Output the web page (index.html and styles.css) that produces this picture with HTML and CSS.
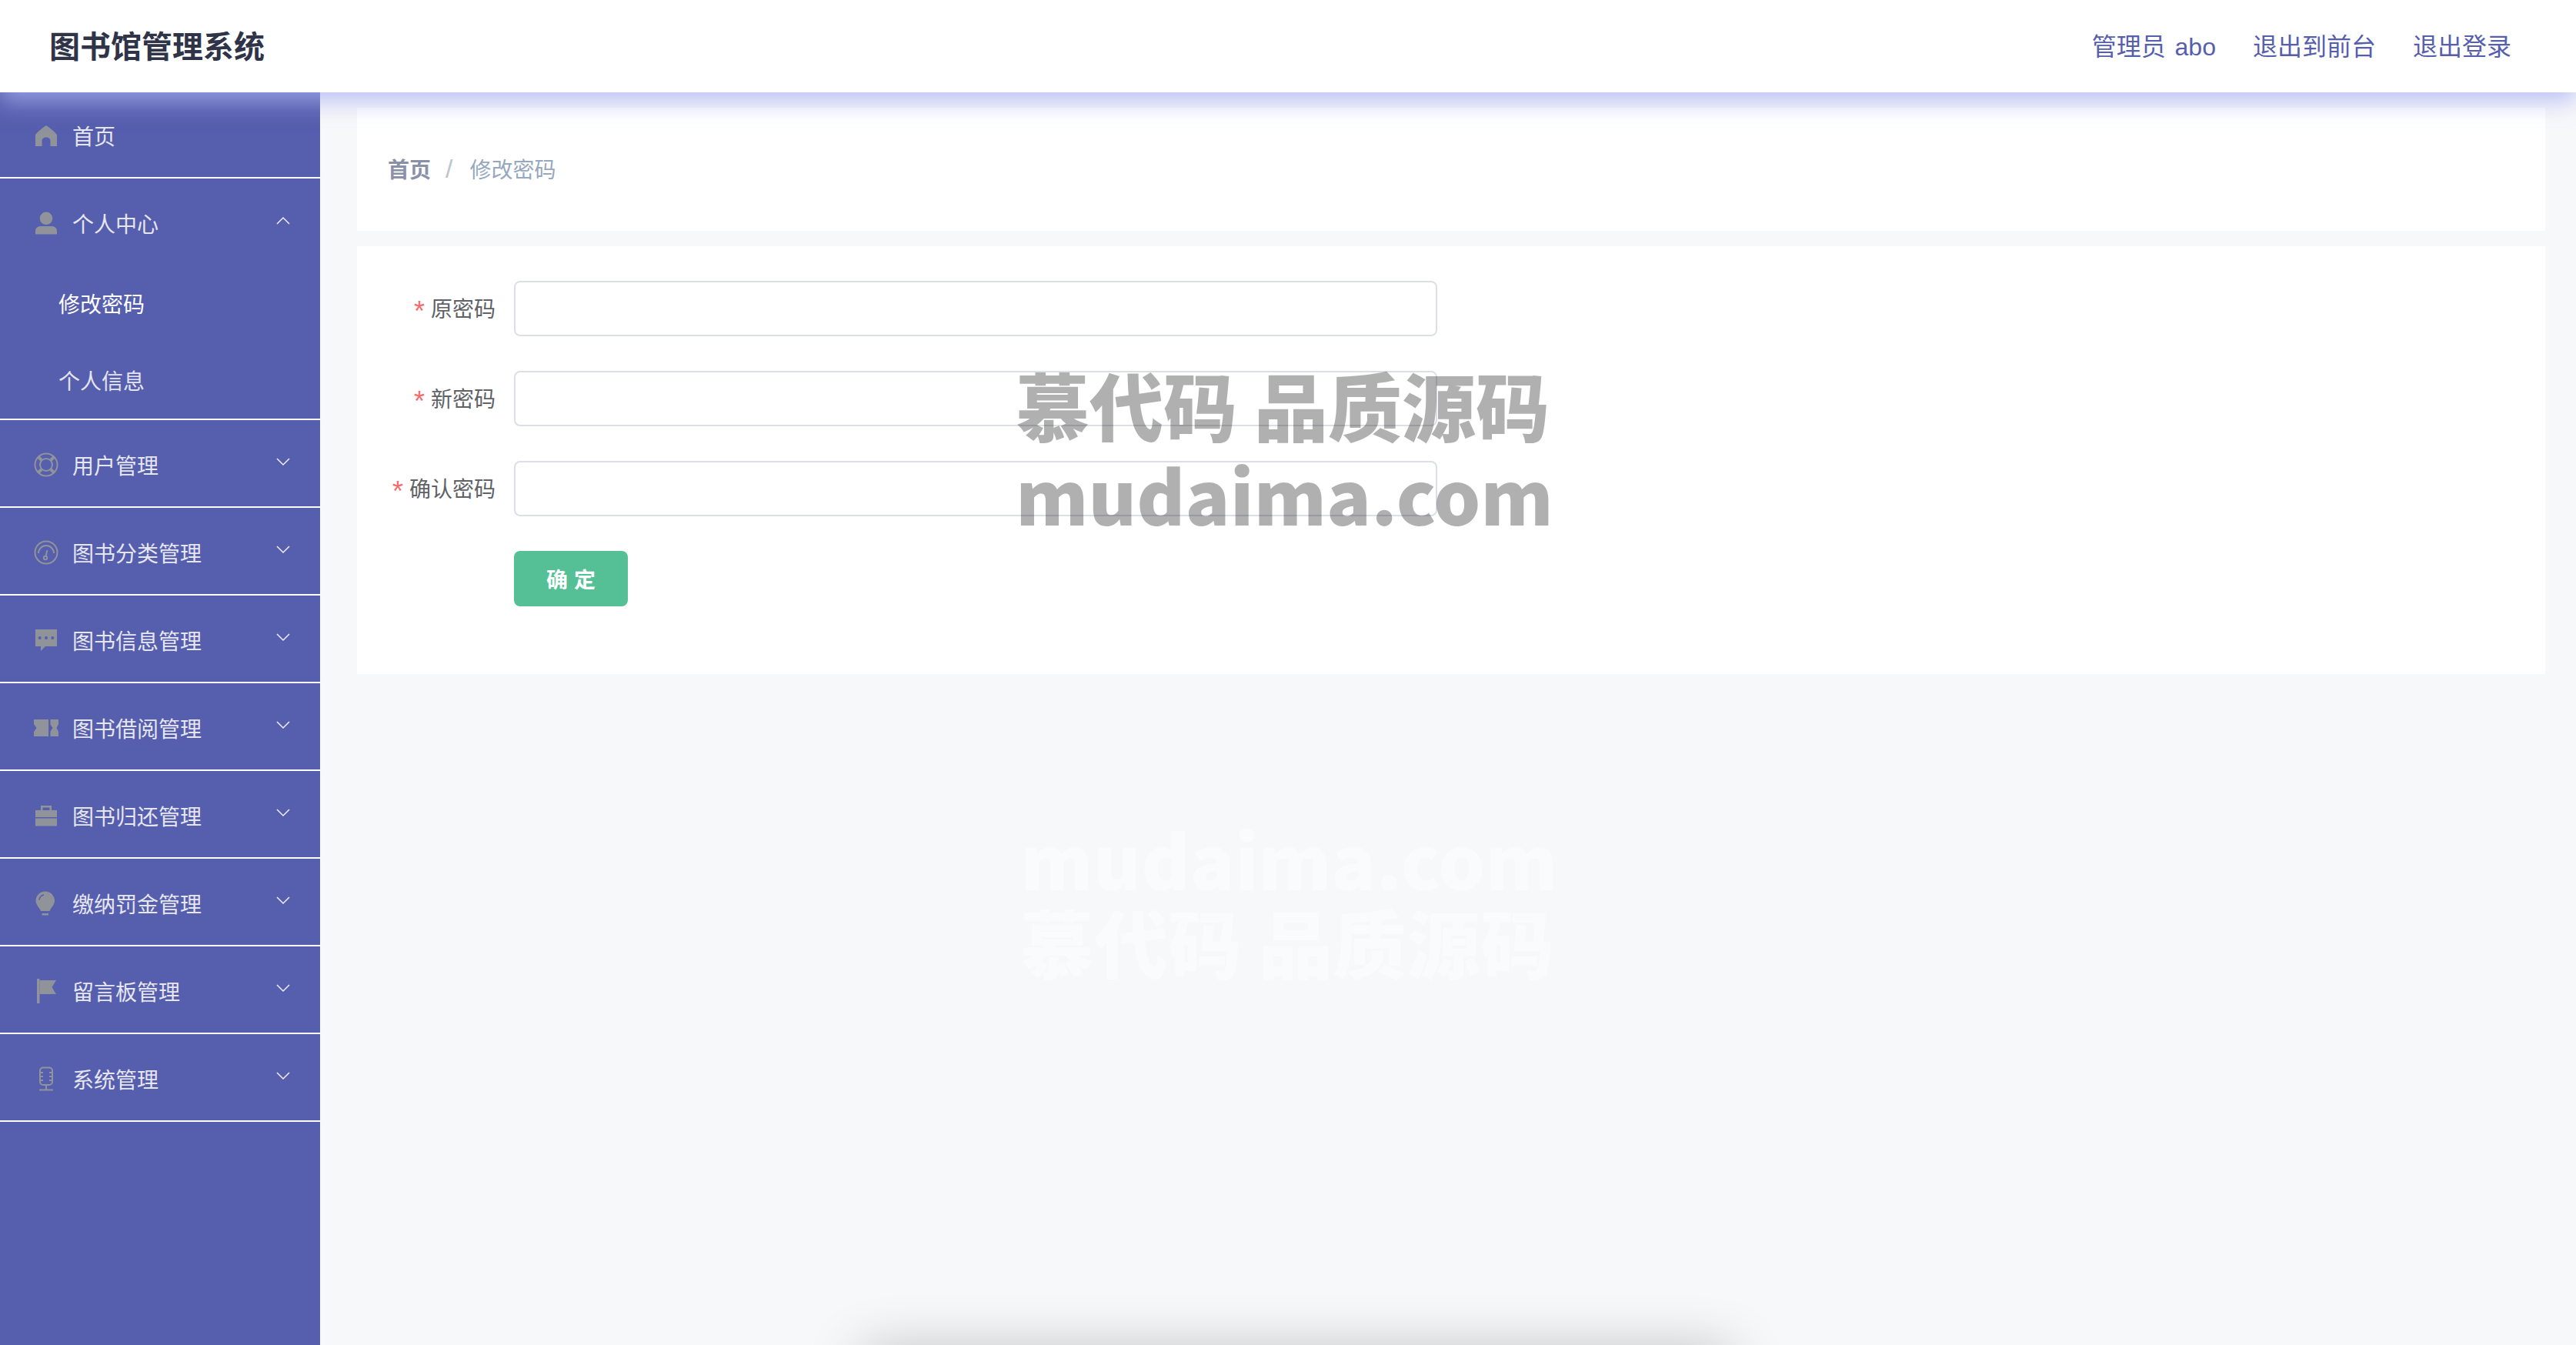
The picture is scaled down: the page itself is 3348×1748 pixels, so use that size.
FILE: index.html
```html
<!DOCTYPE html>
<html lang="zh-CN">
<head>
  <meta charset="UTF-8">
  <title>图书馆管理系统</title>
  <link rel="stylesheet" href="styles.css">
</head>
<body>
  <header class="header">
    <div class="header-title">图书馆管理系统</div>
    <nav class="header-links">
      <span class="header-user">管理员 abo</span>
      <span>退出到前台</span>
      <span>退出登录</span>
    </nav>
  </header>

  <div class="layout">
    <aside class="sidebar">
      <div class="menu-group">
        <div class="menu-item">
          <svg class="menu-icon" viewBox="0 0 32 32"><path d="M16 3C18 4 27 11 30 15V30H21.5V23C21.5 20 19 18.5 16 18.5S10.500 20 10.500 23V30H2V15C5 11 14 4 16 3Z"/></svg>
          <span>首页</span>
        </div>
      </div>
      <div class="menu-group">
        <div class="menu-item">
          <svg class="menu-icon" viewBox="0 0 32 32"><circle cx="16" cy="9.800" r="8.300"/><path d="M2 30.500V26C2 22.500 5 20 9 20H23C27 20 30 22.500 30 26V30.500Z"/></svg>
          <span>个人中心</span>
          <svg class="menu-arrow" viewBox="0 0 18 11"><polyline points="1,10 9,2 17,10"/></svg>
        </div>
        <div class="submenu-item submenu-active">修改密码</div>
        <div class="submenu-item">个人信息</div>
      </div>
      <div class="menu-group">
        <div class="menu-item">
          <svg class="menu-icon icon-line" viewBox="0 0 32 32"><circle cx="16" cy="16" r="14.500"/><circle cx="16" cy="16" r="8"/><path d="M10 10L6 6M22 10L26 6M10 22L6 26M22 22L26 26" stroke-width="4"/></svg>
          <span>用户管理</span>
          <svg class="menu-arrow" viewBox="0 0 18 11"><polyline points="1,1 9,9 17,1"/></svg>
        </div>
      </div>
      <div class="menu-group">
        <div class="menu-item">
          <svg class="menu-icon icon-line" viewBox="0 0 32 32"><circle cx="16" cy="16" r="14.500"/><path d="M6 17A10 10 0 0 1 26 17M15.500 21L17.500 13"/><circle cx="15" cy="23" r="2.200"/></svg>
          <span>图书分类管理</span>
          <svg class="menu-arrow" viewBox="0 0 18 11"><polyline points="1,1 9,9 17,1"/></svg>
        </div>
      </div>
      <div class="menu-group">
        <div class="menu-item">
          <svg class="menu-icon" viewBox="0 0 32 32"><path d="M2 2H30V24H15L9 30V24H2Z"/><circle class="icon-hole" cx="7.700" cy="13" r="2"/><circle class="icon-hole" cx="16" cy="13" r="2"/><circle class="icon-hole" cx="24.300" cy="13" r="2"/></svg>
          <span>图书信息管理</span>
          <svg class="menu-arrow" viewBox="0 0 18 11"><polyline points="1,1 9,9 17,1"/></svg>
        </div>
      </div>
      <div class="menu-group">
        <div class="menu-item">
          <svg class="menu-icon" viewBox="0 0 32 32"><path d="M0 5H19V27H0V21L3.500 16L0 11Z"/><path d="M21.500 5H32V11L29.500 16L32 21V27H21.500V20.500L24.500 16L21.500 11.500Z"/></svg>
          <span>图书借阅管理</span>
          <svg class="menu-arrow" viewBox="0 0 18 11"><polyline points="1,1 9,9 17,1"/></svg>
        </div>
      </div>
      <div class="menu-group">
        <div class="menu-item">
          <svg class="menu-icon" viewBox="0 0 32 32"><path d="M9 9V3H23V9H20.500V5.500H11.500V9Z"/><rect x="2" y="9" width="28" height="9"/><rect x="2" y="19.500" width="28" height="10"/></svg>
          <span>图书归还管理</span>
          <svg class="menu-arrow" viewBox="0 0 18 11"><polyline points="1,1 9,9 17,1"/></svg>
        </div>
      </div>
      <div class="menu-group">
        <div class="menu-item">
          <svg class="menu-icon" viewBox="0 0 32 32"><path d="M14.750 .500C21.500 .500 27 6 27 12.700C27 17.500 23 20.500 20.500 26H9C6.500 20.500 2.500 17.500 2.500 12.700C2.500 6 8 .500 14.750 .500Z"/><rect x="10.500" y="29" width="8.500" height="2.500"/><path class="icon-hole-line" d="M7 11.500C7.500 8 10 5.500 13 5"/></svg>
          <span>缴纳罚金管理</span>
          <svg class="menu-arrow" viewBox="0 0 18 11"><polyline points="1,1 9,9 17,1"/></svg>
        </div>
      </div>
      <div class="menu-group">
        <div class="menu-item">
          <svg class="menu-icon" viewBox="0 0 32 32"><rect x="4" y="0" width="3.500" height="32"/><path d="M7.500 2H29L23.500 11L29 20H7.500Z"/></svg>
          <span>留言板管理</span>
          <svg class="menu-arrow" viewBox="0 0 18 11"><polyline points="1,1 9,9 17,1"/></svg>
        </div>
      </div>
      <div class="menu-group">
        <div class="menu-item">
          <svg class="menu-icon icon-line" viewBox="0 0 32 32"><rect x="8" y="1.500" width="16" height="22.500" rx="4"/><path d="M8 8H12M20 8H24M8 13H12M20 13H24M8 18H12M20 18H24M16 24V30M7 30.500H25"/></svg>
          <span>系统管理</span>
          <svg class="menu-arrow" viewBox="0 0 18 11"><polyline points="1,1 9,9 17,1"/></svg>
        </div>
      </div>
    </aside>

    <main class="main">
      <div class="card breadcrumb">
        <span class="crumb-home">首页</span>
        <span class="crumb-sep">/</span>
        <span class="crumb-current">修改密码</span>
      </div>
      <form class="card form-card">
        <div class="form-row">
          <label class="form-label"><span class="required">*</span>原密码</label>
          <input class="form-input" type="password">
        </div>
        <div class="form-row">
          <label class="form-label"><span class="required">*</span>新密码</label>
          <input class="form-input" type="password">
        </div>
        <div class="form-row">
          <label class="form-label"><span class="required">*</span>确认密码</label>
          <input class="form-input" type="password">
        </div>
        <div class="form-actions">
          <button class="btn-submit" type="button">确 定</button>
        </div>
      </form>
    </main>
  </div>

  <div class="watermark">
    <div class="watermark-cn">慕代码 品质源码</div>
    <div class="watermark-en">mudaima.com</div>
  </div>
  <div class="watermark watermark-ghost">
    <div class="watermark-en">mudaima.com</div>
    <div class="watermark-cn">慕代码 品质源码</div>
  </div>
  <div class="bottom-shadow"></div>
</body>
</html>
```

FILE: styles.css
```css
* {
  box-sizing: border-box;
}
html, body {
  margin: 0;
  height: 100%;
  overflow: hidden;
}
body {
  font-family: "Liberation Sans", "Noto Sans CJK SC", sans-serif;
  background: #f7f8fa;
  color: #606266;
}

.header {
  position: relative;
  z-index: 2;
  display: flex;
  justify-content: space-between;
  align-items: center;
  height: 120px;
  padding: 0 84px 4px 64px;
  background: #fff;
  box-shadow: 0 12px 28px rgba(170, 178, 242, 0.75);
}
.header-title {
  font-size: 40px;
  font-weight: bold;
  color: #2f3449;
}
.header-links {
  display: flex;
  gap: 48px;
  font-size: 32px;
  color: #565eae;
}
.header-user {
  word-spacing: 3px;
}

.layout {
  display: grid;
  grid-template-columns: 416px 1fr;
  height: 1628px;
}
.sidebar {
  background: #565eae;
}
.menu-group {
  border-bottom: 2px solid #fff;
}
.menu-group:first-child .menu-item {
  height: 110px;
  padding-bottom: 2px;
}
.menu-item {
  display: flex;
  align-items: center;
  height: 112px;
  padding: 0 39px 0 44px;
  font-size: 28px;
  color: #e6e6ee;
}
.menu-item span {
  margin-left: 18px;
  padding-top: 3px;
}
.menu-icon {
  flex: none;
  width: 32px;
  height: 32px;
  margin-top: 3px;
  fill: #909399;
}
.icon-line {
  fill: none;
  stroke: #909399;
  stroke-width: 2;
}
.icon-line circle:last-child {
  fill: none;
}
.icon-hole {
  fill: #565eae;
}
.icon-hole-line {
  fill: none;
  stroke: #565eae;
  stroke-width: 1.500;
}
.menu-arrow {
  flex: none;
  width: 18px;
  height: 11px;
  margin-left: auto;
  margin-bottom: 4px;
  fill: none;
  stroke: #f0f0f6;
  stroke-width: 1.500;
}
.submenu-item {
  display: flex;
  align-items: center;
  height: 100px;
  padding-left: 76px;
  font-size: 28px;
  color: #e4e4ee;
}
.submenu-active {
  color: #fff;
}

.main {
  display: flex;
  flex-direction: column;
  align-items: stretch;
  gap: 20px;
  padding: 20px 40px 0 48px;
}
.card {
  background: #fff;
}
.breadcrumb {
  display: flex;
  align-items: center;
  height: 160px;
  padding: 0 0 2px 40px;
  font-size: 28px;
}
.crumb-home {
  font-weight: bold;
  color: #8a90a8;
}
.crumb-sep {
  margin: 0 22px 0 19px;
  font-size: 34px;
  line-height: 34px;
  color: #c0c4cc;
}
.crumb-current {
  color: #97a8be;
}
.form-card {
  padding: 45px 0 43px;
}
.form-row {
  display: flex;
  align-items: center;
  margin-bottom: 45px;
}
.form-label {
  width: 180px;
  margin-right: 24px;
  padding-bottom: 2px;
  text-align: right;
  font-size: 28px;
  color: #606266;
}
.required {
  margin-right: 8px;
  font-size: 36px;
  line-height: 28px;
  vertical-align: -5px;
  color: #f56c6c;
}
.form-input {
  width: 1200px;
  height: 72px;
  border: 2px solid #dcdfe6;
  border-radius: 8px;
  background: #fff;
  outline: none;
}
.form-actions {
  margin: 0 0 45px 204px;
}
.btn-submit {
  display: block;
  width: 148px;
  height: 72px;
  padding: 0;
  border: none;
  border-radius: 8px;
  background: #55bf96;
  color: #fff;
  font-family: inherit;
  font-size: 28px;
  font-weight: bold;
}

.watermark {
  position: absolute;
  top: 466px;
  left: 1320px;
  z-index: 3;
  display: flex;
  flex-direction: column;
  font-family: "Noto Sans CJK SC", sans-serif;
  font-size: 96px;
  line-height: 117px;
  font-weight: 900;
  color: rgba(0, 0, 0, 0.31);
  white-space: nowrap;
}
.watermark-ghost {
  top: 1062px;
  left: 1326px;
  line-height: 107px;
  color: rgba(255, 255, 255, 0.4);
}
.bottom-shadow {
  position: absolute;
  top: 1768px;
  left: 1130px;
  width: 1110px;
  height: 20px;
  box-shadow: 0 0 70px 10px rgba(0, 0, 0, 0.3);
}
```
